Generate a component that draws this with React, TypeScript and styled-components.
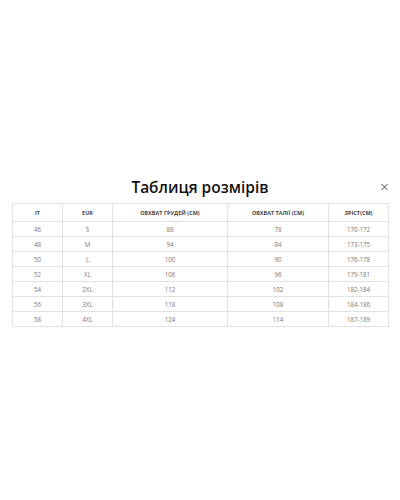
import React from 'react';
import styled, { createGlobalStyle } from 'styled-components';

const GlobalStyle = createGlobalStyle`
  html, body {
    margin: 0;
    padding: 0;
    background: #ffffff;
  }
  body {
    font-family: "Open Sans", "Liberation Sans", sans-serif;
  }
`;

const rows = [
  ['46', 'S', '88', '78', '170-172'],
  ['48', 'M', '94', '84', '173-175'],
  ['50', 'L', '100', '90', '176-178'],
  ['52', 'XL', '106', '96', '179-181'],
  ['54', '2XL', '112', '102', '182-184'],
  ['56', '3XL', '118', '108', '184-186'],
  ['58', '4XL', '124', '114', '187-189'],
];

const headers = ['IT', 'EUR', 'ОБХВАТ ГРУДЕЙ (CM)', 'ОБХВАТ ТАЛІЇ (CM)', 'ЗРІСТ(CM)'];
const widths = [50, 50, 115, 101, 60];

const App: React.FC = () => {
  return (
    <>
      <GlobalStyle />
      <Page>
        <Header>
          <Title>Таблиця розмірів</Title>
          <CloseButton aria-label="close">
            <svg width="7" height="7" viewBox="0 0 7 7">
              <path d="M0.5 0.5 L6.5 6.5 M6.5 0.5 L0.5 6.5" stroke="#333" strokeWidth="0.9" />
            </svg>
          </CloseButton>
        </Header>
        <Table>
          <colgroup>
            {widths.map((w, i) => (
              <col key={i} style={{ width: w }} />
            ))}
          </colgroup>
          <thead>
            <tr>
              {headers.map(h => (
                <HeadCell key={h}>{h}</HeadCell>
              ))}
            </tr>
          </thead>
          <tbody>
            {rows.map(r => (
              <tr key={r[0]}>
                {r.map((c, i) => (
                  <Cell key={i}>{c}</Cell>
                ))}
              </tr>
            ))}
          </tbody>
        </Table>
      </Page>
    </>
  );
};

const Page = styled.div`
  width: 400px;
  height: 500px;
  padding: 173px 12px 0;
  box-sizing: border-box;
`;

const Header = styled.div`
  position: relative;
  display: flex;
  justify-content: center;
  align-items: center;
  height: 28px;
  margin-bottom: 2px;
`;

const Title = styled.h2`
  margin: 0;
  font-family: "Open Sans", "Liberation Sans", sans-serif;
  font-size: 15.5px;
  font-weight: 600;
  color: #111;
  letter-spacing: 0;
`;

const CloseButton = styled.button`
  position: absolute;
  right: -2px;
  top: 50%;
  transform: translateY(-50%);
  display: flex;
  padding: 2px;
  border: none;
  background: transparent;
`;

const Table = styled.table`
  width: 376px;
  border-collapse: collapse;
  table-layout: fixed;
`;

const HeadCell = styled.th`
  height: 17px;
  padding: 0;
  border: 1px solid #e2e2e2;
  font-size: 5.5px;
  font-weight: 700;
  color: #444;
  text-align: center;
  vertical-align: middle;
`;

const Cell = styled.td`
  height: 14px;
  padding: 0;
  border: 1px solid #e2e2e2;
  font-size: 6.2px;
  font-weight: 400;
  color: #777;
  text-align: center;
  vertical-align: middle;
`;

export default App;
